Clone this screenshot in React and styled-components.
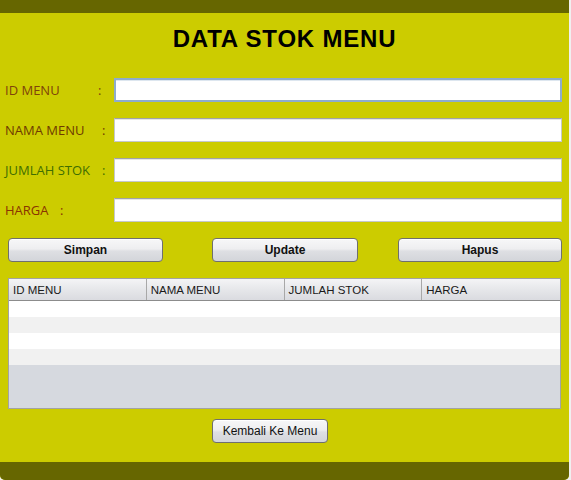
import React from "react";
import styled, { createGlobalStyle } from "styled-components";

const GlobalStyle = createGlobalStyle`
  html, body {
    margin: 0;
    padding: 0;
    background: #f0f0f0;
  }
  * { box-sizing: border-box; }
`;

const fields = [
  { label: "ID MENU", color: "#80430a", colonAt: 93, focused: true },
  { label: "NAMA MENU", color: "#6e3a00", colonAt: 97 },
  { label: "JUMLAH STOK", color: "#3f6e00", colonAt: 97 },
  { label: "HARGA", color: "#8a3300", colonAt: 55 },
];

const columns = ["ID MENU", "NAMA MENU", "JUMLAH STOK", "HARGA"];

export default function App() {
  return (
    <>
      <GlobalStyle />
      <Panel>
        <TopBar />
        <Title>DATA STOK MENU</Title>

        <Form>
          {fields.map((f) => (
            <Row key={f.label}>
              <LabelGroup>
                <Label $color={f.color} $w={f.colonAt}>{f.label}</Label>
                <Colon $color={f.color}>:</Colon>
              </LabelGroup>
              <Input $focused={f.focused} />
            </Row>
          ))}
        </Form>

        <ActionBar>
          <Button $w={155}>Simpan</Button>
          <Button $w={146} $ml={49}>Update</Button>
          <Button $w={164} $ml={40}>Hapus</Button>
        </ActionBar>

        <Table>
          <HeaderRow>
            {columns.map((c) => (
              <HeaderCell key={c}>{c}</HeaderCell>
            ))}
          </HeaderRow>
          {[0, 1, 2, 3].map((i) => (
            <BodyRow key={i} $odd={i % 2 === 1} />
          ))}
          <EmptyArea />
        </Table>

        <Footer>
          <BackButton>Kembali Ke Menu</BackButton>
        </Footer>

        <BottomBar />
      </Panel>
    </>
  );
}

const Panel = styled.div`
  width: 569px;
  height: 480px;
  background: #cccc00;
  display: flex;
  flex-direction: column;
  border-radius: 0 0 5px 5px;
  overflow: hidden;
`;

const TopBar = styled.div`
  height: 13px;
  background: #666600;
  flex-shrink: 0;
`;

const Title = styled.h1`
  margin: 13px 0 0;
  height: 25px;
  line-height: 25px;
  text-align: center;
  font-family: "Liberation Sans", Arial, sans-serif;
  font-weight: 700;
  font-size: 24px;
  letter-spacing: 0.8px;
  color: #000;
`;

const Form = styled.div`
  margin-top: 27px;
  display: flex;
  flex-direction: column;
  gap: 16px;
`;

const Row = styled.div`
  display: grid;
  grid-template-columns: 114px 448px;
  align-items: center;
  height: 24px;
`;

const LabelGroup = styled.div`
  display: flex;
  align-items: center;
  padding-left: 5px;
`;

const Label = styled.span`
  width: ${(p) => p.$w}px;
  font-family: "Open Sans", sans-serif;
  font-size: 13px;
  color: ${(p) => p.$color};
  white-space: nowrap;
`;

const Colon = styled.span`
  font-family: "Open Sans", sans-serif;
  font-size: 13px;
  color: ${(p) => p.$color};
`;

const Input = styled.div`
  height: 24px;
  background: #fff;
  border: 1px solid #c5c8cc;
  border-top-color: #a0a3a8;
  box-shadow: inset 0 1px 0 #e6e6e6;
  ${(p) =>
    p.$focused &&
    `
    border: 2px solid #8eaccc;
    box-shadow: inset 0 1px 0 #dde6ef;
  `}
`;

const ActionBar = styled.div`
  display: flex;
  padding-left: 8px;
  margin-top: 16px;
`;

const Button = styled.button`
  width: ${(p) => p.$w}px;
  margin-left: ${(p) => p.$ml || 0}px;
  height: 24px;
  padding: 0;
  border: 1px solid #6f6f6f;
  border-radius: 4px;
  background: linear-gradient(#f7f7f8 0%, #eeeef0 45%, #dedfe3 55%, #d3d5da 100%);
  box-shadow: inset 0 1px 0 #fff;
  font-family: "Liberation Sans", Arial, sans-serif;
  font-weight: 700;
  font-size: 12px;
  color: #111;
`;

const Table = styled.div`
  margin: 16px 0 0 8px;
  width: 553px;
  height: 131px;
  border: 1px solid #a3a3a3;
  background: #d6d9df;
  display: flex;
  flex-direction: column;
`;

const HeaderRow = styled.div`
  display: grid;
  grid-template-columns: repeat(4, 1fr);
  height: 22px;
  border-bottom: 1px solid #8c8c8c;
  background: linear-gradient(#f4f4f6 0%, #e6e7ea 50%, #dadbe0 100%);
  flex-shrink: 0;
`;

const HeaderCell = styled.div`
  display: flex;
  align-items: center;
  padding-left: 4px;
  border-right: 1px solid #a8a8a8;
  font-family: "Liberation Sans", Arial, sans-serif;
  font-size: 11.5px;
  color: #1a1a1a;
  &:last-child { border-right: none; }
`;

const BodyRow = styled.div`
  height: 16px;
  background: ${(p) => (p.$odd ? "#f1f1f1" : "#ffffff")};
  flex-shrink: 0;
`;

const EmptyArea = styled.div`
  flex: 1;
`;

const Footer = styled.div`
  display: flex;
  padding-left: 212px;
  margin-top: 10px;
`;

const BackButton = styled(Button)`
  width: 116px;
  height: 24px;
  font-weight: 400;
  font-size: 12px;
`;

const BottomBar = styled.div`
  margin-top: auto;
  height: 18px;
  background: #666600;
  flex-shrink: 0;
`;
